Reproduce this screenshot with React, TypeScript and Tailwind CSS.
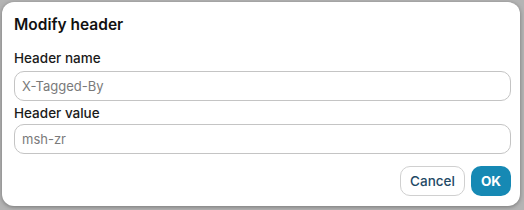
import React from "react";

export default function App() {
  return (
    <div className="w-[524px] h-[210px] bg-[#b4b4b4] p-[2px] pr-[4px] pb-[4px]" style={{ fontFamily: "Inter, 'Noto Sans', sans-serif" }}>
      <div className="h-full w-full bg-white rounded-[12px] shadow-[0_1px_4px_rgba(0,0,0,0.35)] pl-[12px] pr-[9px] pt-[13px] flex flex-col">
        <div className="text-[15.5px] font-semibold text-[#111] leading-[20px]">Modify header</div>
        <div className="mt-[15px] text-[13.5px] font-medium text-[#1a1a1a] leading-[16px]">Header name</div>
        <input
          className="mt-[5px] h-[30px] w-full rounded-[10px] border border-[#c4c4c4] px-[7px] text-[13px] text-[#222] placeholder:text-[#7a7a7a] outline-none"
          placeholder="X-Tagged-By"
        />
        <div className="mt-[4px] text-[13.5px] font-medium text-[#1a1a1a] leading-[16px]">Header value</div>
        <input
          className="mt-[3px] h-[30px] w-full rounded-[10px] border border-[#c4c4c4] px-[7px] text-[13px] text-[#222] placeholder:text-[#7a7a7a] outline-none"
          placeholder="msh-zr"
        />
        <div className="mt-[12px] flex justify-end gap-[6px]">
          <button className="h-[30px] w-[65px] rounded-[10px] border border-[#d0d0d0] bg-white text-[13.5px] font-medium text-[#1f4a66]">
            Cancel
          </button>
          <button className="h-[30px] w-[40px] rounded-[10px] bg-[#1689b4] text-[13.5px] font-bold text-white">
            OK
          </button>
        </div>
      </div>
    </div>
  );
}
